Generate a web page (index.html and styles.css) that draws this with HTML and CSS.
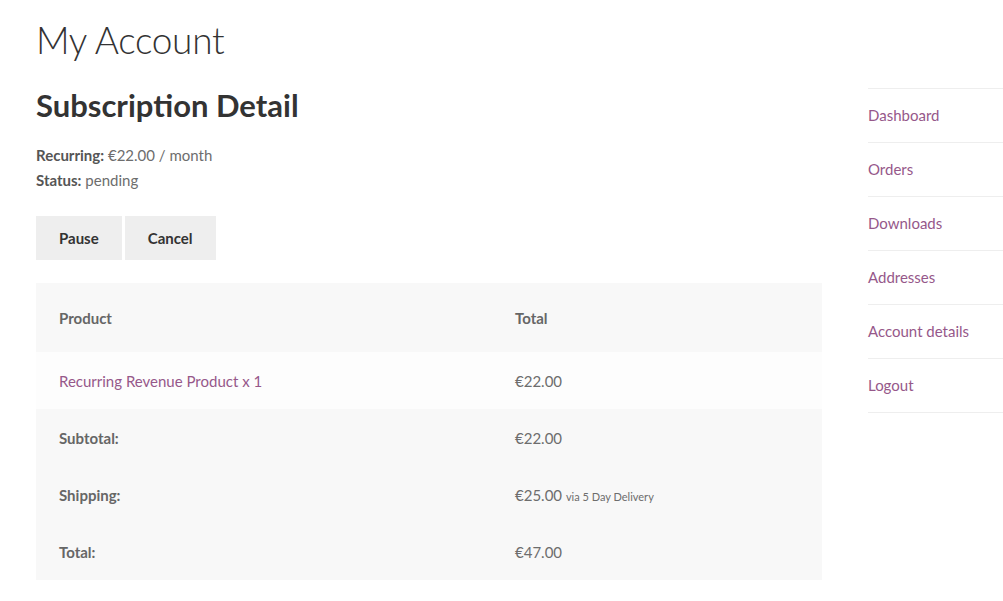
FILE: index.html
```html
<!DOCTYPE html>
<html lang="en">

<head>
  <meta charset="UTF-8">
  <meta name="viewport" content="width=device-width, initial-scale=1.0">
  <title>My Account</title>
  <link rel="stylesheet" href="styles.css">
</head>

<body>
  <div class="page">
    <h1 class="page-title">My Account</h1>

    <div class="account">
      <main class="account-content">
        <h2>Subscription Detail</h2>
        <p class="meta"><strong>Recurring:</strong> €22.00 / month</p>
        <p class="meta"><strong>Status:</strong> pending</p>

        <div class="actions">
          <a href="#" class="button">Pause</a>
          <a href="#" class="button">Cancel</a>
        </div>

        <table class="order">
          <thead>
            <tr>
              <th class="col-product">Product</th>
              <th>Total</th>
            </tr>
          </thead>
          <tbody>
            <tr class="item">
              <td><a href="#">Recurring Revenue Product x 1</a></td>
              <td>€22.00</td>
            </tr>
          </tbody>
          <tfoot>
            <tr>
              <th>Subtotal:</th>
              <td>€22.00</td>
            </tr>
            <tr>
              <th>Shipping:</th>
              <td>€25.00 <small>via 5 Day Delivery</small></td>
            </tr>
            <tr>
              <th>Total:</th>
              <td>€47.00</td>
            </tr>
          </tfoot>
        </table>
      </main>

      <nav class="account-nav">
        <ul>
          <li><a href="#">Dashboard</a></li>
          <li><a href="#">Orders</a></li>
          <li><a href="#">Downloads</a></li>
          <li><a href="#">Addresses</a></li>
          <li><a href="#">Account details</a></li>
          <li><a href="#">Logout</a></li>
        </ul>
      </nav>
    </div>
  </div>
</body>

</html>
```

FILE: styles.css
```css
body {
  margin: 0;
  overflow: hidden;
  font-family: Lato, "Liberation Sans", sans-serif;
  font-size: 15px;
  color: #6d6d6d;
  background-color: #ffffff;
}

a {
  color: #96588a;
  text-decoration: none;
}

.page {
  padding-left: 36px;
}

.page-title {
  margin: 18px 0 0;
  font-size: 37px;
  line-height: 44px;
  font-weight: 300;
  letter-spacing: -0.3px;
  color: #333333;
}

.account {
  display: flex;
  gap: 46px;
}

.account-content {
  width: 786px;
  flex-shrink: 0;
}

.account-content h2 {
  margin: 24px 0 19px;
  font-size: 31px;
  line-height: 38px;
  font-weight: 700;
  color: #333333;
}

.meta {
  margin: 0;
  line-height: 25px;
}

.meta strong {
  color: #555555;
}

.actions {
  display: flex;
  gap: 3px;
  margin-top: 23px;
}

.button {
  display: block;
  height: 44px;
  line-height: 44px;
  padding: 0 23px;
  background: #eeeeee;
  color: #333333;
  font-weight: 700;
}

.order {
  width: 786px;
  margin-top: 23px;
  border-collapse: collapse;
  background: #f8f8f8;
}

.order th,
.order td {
  text-align: left;
  padding: 0 23px;
  height: 57px;
  font-weight: 400;
}

.order th {
  font-weight: 700;
  color: #666666;
}

.order thead th {
  height: 69px;
}

.order .col-product {
  width: 410px;
}

.order .item td {
  background: #fdfdfd;
}

.order small {
  font-size: 11px;
}

.account-nav {
  flex: 1;
  margin-top: 26px;
}

.account-nav ul {
  list-style: none;
  margin: 0;
  padding: 0;
  border-top: 1px solid #eeeeee;
}

.account-nav li {
  border-bottom: 1px solid #eeeeee;
}

.account-nav a {
  display: block;
  height: 53px;
  line-height: 53px;
}
```
